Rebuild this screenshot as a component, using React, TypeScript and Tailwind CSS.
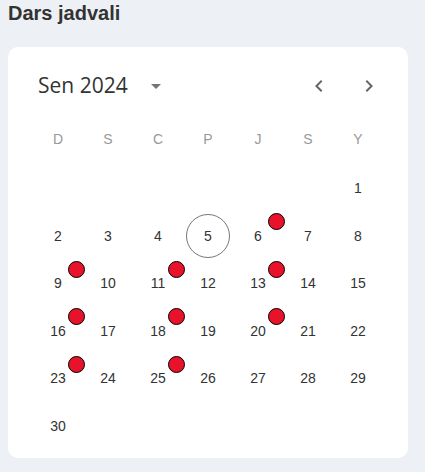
import React from 'react'

const WEEKDAYS = ['D', 'S', 'C', 'P', 'J', 'S', 'Y']

// Sentyabr 2024 boshlanishi yakshanba (Y) ustunida
const LEAD = 6
const DAYS_IN_MONTH = 30
const TODAY = 5
const LESSON_DAYS = [6, 9, 11, 13, 16, 18, 20, 23, 25]

function ChevronLeft() {
  return (
    <svg viewBox="0 0 24 24" className="w-6 h-6 fill-[#666]">
      <path d="M15.41 7.41 14 6l-6 6 6 6 1.41-1.41L10.83 12z" />
    </svg>
  )
}

function ChevronRight() {
  return (
    <svg viewBox="0 0 24 24" className="w-6 h-6 fill-[#666]">
      <path d="M10 6 8.59 7.41 13.17 12l-4.58 4.59L10 18l6-6z" />
    </svg>
  )
}

function DayCell({ day }: { day: number | null }) {
  if (day === null) return <div className="w-[50px] h-[47.5px]" />
  const isToday = day === TODAY
  const hasLesson = LESSON_DAYS.includes(day)
  return (
    <div className="w-[50px] h-[47.5px] flex items-center justify-center">
      <div
        className={`relative w-[44px] h-[44px] rounded-full flex items-center justify-center text-[14px] text-[#333] ${
          isToday ? 'border border-[#777]' : ''
        }`}
      >
        {day}
        {hasLesson && (
          <span className="absolute left-[32px] top-[-1px] w-[17px] h-[17px] rounded-full bg-[#e8132a] border border-black" />
        )}
      </div>
    </div>
  )
}

export default function App() {
  const cells: (number | null)[] = [
    ...Array.from({ length: LEAD }, () => null),
    ...Array.from({ length: DAYS_IN_MONTH }, (_, i) => i + 1),
  ]
  const weeks: (number | null)[][] = []
  for (let i = 0; i < cells.length; i += 7) weeks.push(cells.slice(i, i + 7))

  return (
    <div className="min-h-[472px] bg-[#edf0f5] px-2 pt-[1px] font-['Liberation_Sans',Arial,sans-serif]">
      <h1 className="text-[20px] leading-6 font-bold text-[#333]">Dars jadvali</h1>

      <div className="mt-[22px] w-[400px] bg-white rounded-[10px] pt-[19px] pb-2 pl-[25px] pr-[23px]">
        {/* Header */}
        <div className="h-10 flex items-center justify-between">
          <div className="flex items-center pl-[5px]">
            <span className="font-['Open_Sans',sans-serif] text-[21px] text-[#333]">Sen 2024</span>
            <svg viewBox="0 0 24 24" className="ml-[16px] w-6 h-6 fill-[#757575]">
              <path d="M7 10l5 5 5-5z" />
            </svg>
          </div>
          <div className="flex items-center gap-[26px] pr-[4px]">
            <ChevronLeft />
            <ChevronRight />
          </div>
        </div>

        {/* Weekdays */}
        <div className="mt-[13px] flex h-10 items-center">
          {WEEKDAYS.map((d, i) => (
            <div key={i} className="w-[50px] text-center text-[14px] text-[#999]">
              {d}
            </div>
          ))}
        </div>

        {/* Days */}
        <div className="mt-[6px]">
          {weeks.map((w, i) => (
            <div key={i} className="flex">
              {w.map((d, j) => (
                <DayCell key={j} day={d} />
              ))}
            </div>
          ))}
        </div>
      </div>
    </div>
  )
}
